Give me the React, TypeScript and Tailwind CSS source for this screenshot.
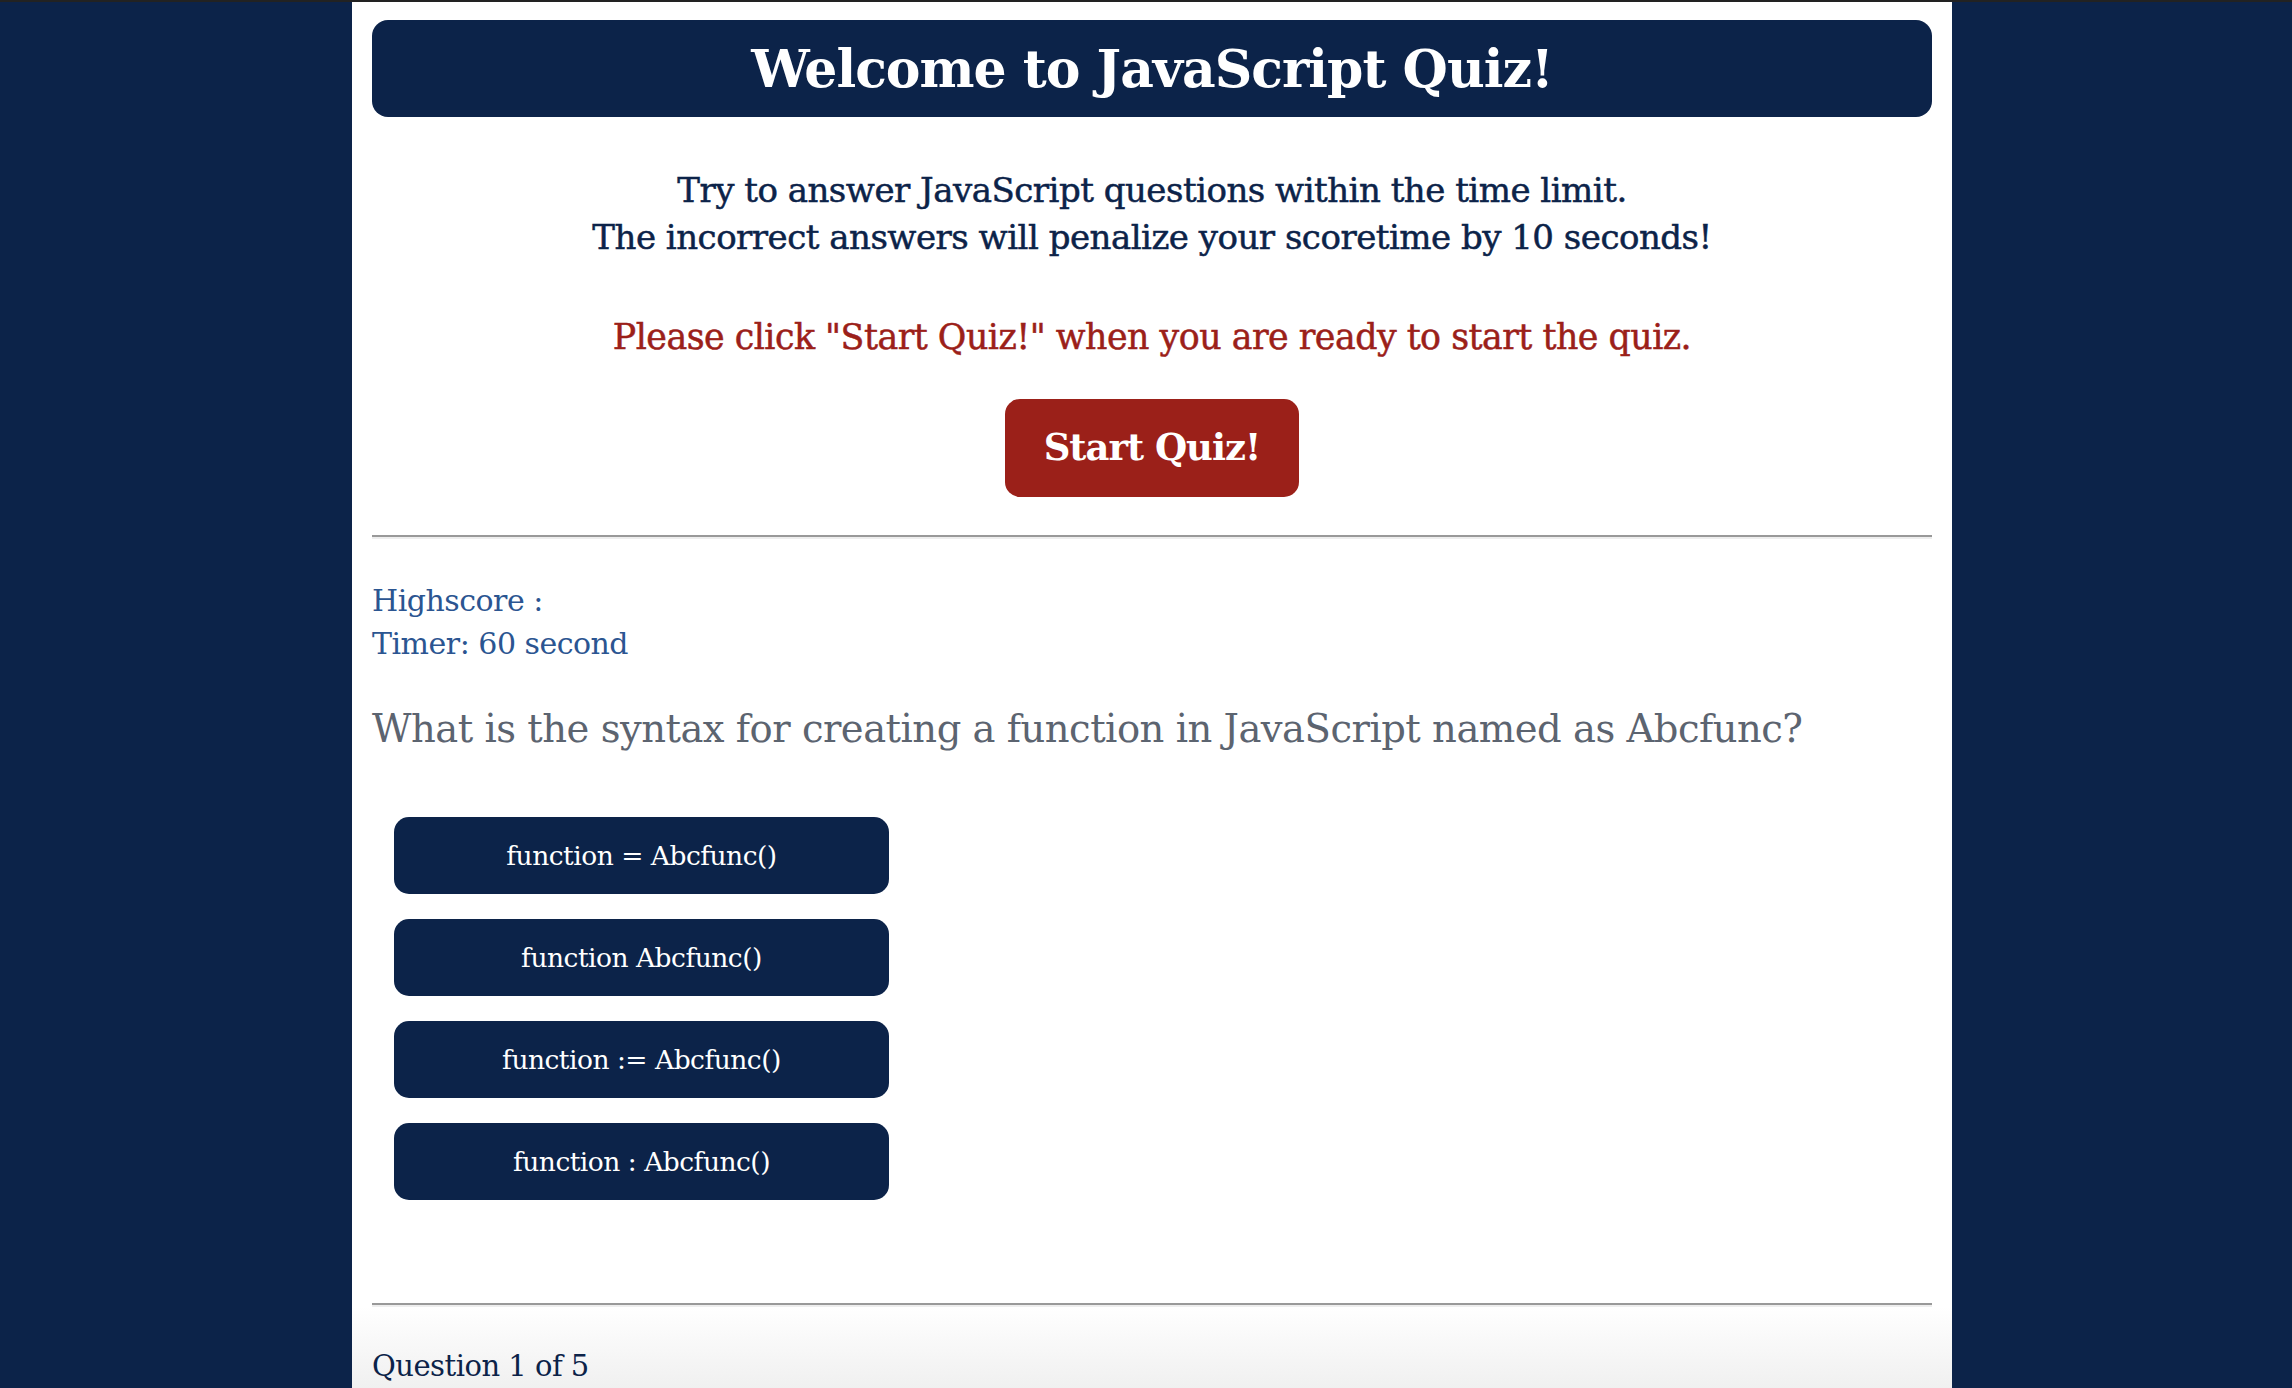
import React from "react";

const answers = [
  "function = Abcfunc()",
  "function Abcfunc()",
  "function := Abcfunc()",
  "function : Abcfunc()",
];

const App = () => {
  return (
    <div
      className="min-h-screen bg-[#0c2349] overflow-hidden"
      style={{ fontFamily: '"DejaVu Serif", "Liberation Serif", serif' }}
    >
      <div className="h-[2px] bg-[#222]" />
      <div className="ml-[352px] w-[1600px] min-h-[1386px] bg-white flex flex-col">
        <div className="px-[20px]">
          <div className="mt-[18px] h-[97px] rounded-[16px] bg-[#0c2349] flex items-center justify-center">
            <h1 className="text-[52px] leading-none text-white font-bold tracking-[-1px]">
              Welcome to JavaScript Quiz!
            </h1>
          </div>

          <p className="mt-[50px] text-center text-[34px] leading-[47px] text-[#0c2349] tracking-[-0.5px] [-webkit-text-stroke:0.5px_#0c2349]">
            Try to answer JavaScript questions within the time limit.
            <br />
            The incorrect answers will penalize your scoretime by 10 seconds!
          </p>
          <p className="mt-[53px] text-center text-[34.8px] leading-[47px] text-[#9b2019] tracking-[-0.5px] [-webkit-text-stroke:0.5px_#9b2019]">
            Please click "Start Quiz!" when you are ready to start the quiz.
          </p>

          <div className="mt-[38px] flex justify-center">
            <button className="w-[294px] h-[98px] rounded-[15px] bg-[#9b2019] text-white text-[37px] font-bold tracking-[-1px]">
              Start Quiz!
            </button>
          </div>

          <hr className="mt-[38px] border-0 border-t-2 border-b-2 border-t-[#999] border-b-[#eee]" />

          <div className="mt-[40px] text-[30px] leading-[43px] text-[#2b5591] tracking-[-0.5px]">
            <p>Highscore :</p>
            <p>Timer: 60 second</p>
          </div>

          <h2 className="mt-[36px] text-[38.5px] leading-[56px] text-[#5c6470] tracking-[-0.5px]">
            What is the syntax for creating a function in JavaScript named as Abcfunc?
          </h2>

          <div className="mt-[60px] ml-[22px] flex flex-col gap-[25px]">
            {answers.map((a) => (
              <button
                key={a}
                className="w-[495px] h-[77px] rounded-[15px] bg-[#0c2349] text-white text-[26.5px] tracking-[-0.5px]"
              >
                {a}
              </button>
            ))}
          </div>

          <hr className="mt-[103px] border-0 border-t-2 border-b-2 border-t-[#999] border-b-[#eee]" />
        </div>

        <div className="flex-1 px-[20px] bg-gradient-to-b from-white to-[#f0f0f0]">
          <p className="mt-[38px] text-[29px] leading-[43px] text-[#0c2349] tracking-[-0.5px]">
            Question 1 of 5
          </p>
        </div>
      </div>
    </div>
  );
};

export default App;
